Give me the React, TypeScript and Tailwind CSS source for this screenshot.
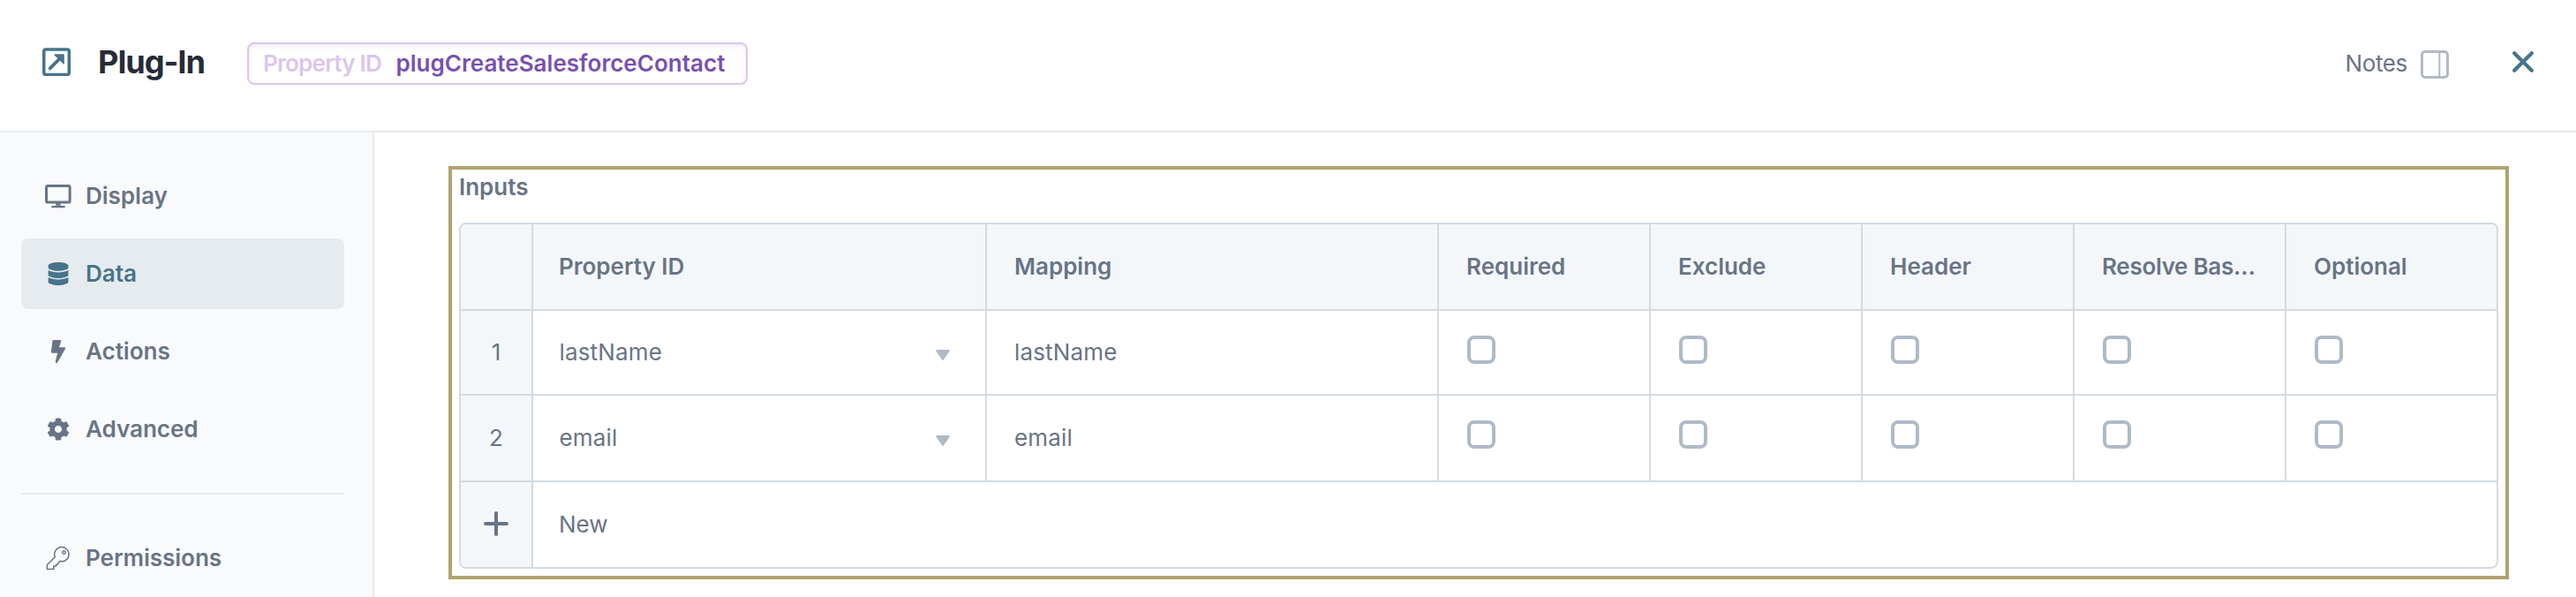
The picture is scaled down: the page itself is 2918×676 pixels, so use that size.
import type { ReactNode } from "react";
import { FaBolt, FaCog, FaDatabase } from "react-icons/fa";

function PlugInIcon() {
  return (
    <svg width="32" height="32" viewBox="0 0 32 32" fill="none">
      <rect x="1.75" y="2" width="28.5" height="28.5" rx="2" stroke="#46748b" strokeWidth="3.5" />
      <path d="M8.7 23.3 L20 12" stroke="#46748b" strokeWidth="3.8" strokeLinecap="round" />
      <path d="M14.2 7.2H23.6a1.2 1.2 0 0 1 1.2 1.2V18.2a.6.6 0 0 1-1 .4L13.6 8.4a.7.7 0 0 1 .6-1.2z" fill="#46748b" />
    </svg>
  );
}

function DisplayIcon() {
  return (
    <svg width="30" height="27" viewBox="0 0 30 27" fill="none">
      <rect x="1.5" y="1.5" width="26.6" height="18.6" rx="1.6" stroke="currentColor" strokeWidth="3" />
      <path d="M12.6 20.5h4.6l.6 3.2h-5.8z" fill="currentColor" />
      <path d="M8.2 25.2h13.6" stroke="currentColor" strokeWidth="2.2" strokeLinecap="round" />
    </svg>
  );
}

function KeyIcon() {
  return (
    <svg width="28" height="28" viewBox="0 0 84 84" fill="none" stroke="currentColor" strokeWidth="4.5" strokeLinejoin="round">
      <path d="M4 79.500V64.500L31 38.500A24.500 24.500 0 1 1 54 53.500L47 52.500L41.500 58.500V62.500L36 63.500L34.500 69H26.500V79.500Z" />
      <circle cx="61.500" cy="22.500" r="5" />
    </svg>
  );
}

function NavItem({ icon, label, active = false }: { icon: ReactNode; label: string; active?: boolean }) {
  return (
    <div
      className={
        active
          ? "flex h-20 shrink-0 items-center gap-[15px] rounded-lg bg-[#e6ebef] pl-[26px] text-[#46748b]"
          : "flex h-20 shrink-0 items-center gap-[15px] pl-[26px] text-[#687486]"
      }
    >
      <span className="flex w-8 justify-center">{icon}</span>
      <span className="text-[26px] leading-8 font-semibold">{label}</span>
    </div>
  );
}

const flags = ["Required", "Exclude", "Header", "Resolve Bas…", "Optional"];
const rows = ["lastName", "email"];

export default function App() {
  return (
    <div className="flex h-[676px] w-full flex-col overflow-hidden bg-white font-['Inter',sans-serif] text-[26px] leading-8 text-[#687486]">
      <header className="flex h-[150px] shrink-0 border-b-2 border-[#e6ebee] pl-12">
        <div className="mt-[54px] h-8 w-8">
          <PlugInIcon />
        </div>
        <h1 className="mt-[48px] ml-[31px] w-[169px] text-[36px] leading-[44px] font-bold tracking-[-0.95px] text-[#252c38]">
          Plug-In
        </h1>
        <div className="mt-12 flex h-12 w-[567px] items-center rounded-lg border-2 border-[#dcc5ec] pl-4 font-semibold shadow-[inset_0_2px_6px_rgba(100,60,140,0.10)]">
          <span className="w-[150.5px] tracking-[-0.75px] text-[#dcc5ed]">Property ID</span>
          <span className="tracking-[0.02px] text-[#7850b0]">plugCreateSalesforceContact</span>
        </div>
        <div className="mt-14 mr-12 ml-auto flex">
          <span className="w-[85.5px] tracking-[-0.4px]">Notes</span>
          <svg className="mt-px" width="32" height="32" viewBox="0 0 32 32" fill="none" stroke="#afbac7">
            <rect x="1.500" y="1.500" width="29" height="29" rx="3.500" strokeWidth="3" />
            <path d="M21.300 2v28" strokeWidth="2" />
          </svg>
          <svg className="mt-0.5 ml-[72px]" width="24" height="24" viewBox="0 0 24 24" fill="none" stroke="#46748b">
            <path d="M2.200 2.200l19.600 19.600M21.800 2.200L2.200 21.800" strokeWidth="4.200" strokeLinecap="round" />
          </svg>
        </div>
      </header>

      <div className="flex min-h-0 flex-1">
        <nav className="flex w-[424px] shrink-0 flex-col gap-2 border-r-2 border-[#e6ebee] bg-[#f9fafc] pt-8 pr-8 pl-6">
          <NavItem icon={<DisplayIcon />} label="Display" />
          <NavItem icon={<FaDatabase size={26} />} label="Data" active />
          <NavItem icon={<FaBolt size={26} />} label="Actions" />
          <NavItem icon={<FaCog size={26} />} label="Advanced" />
          <div className="my-6 h-0.5 shrink-0 bg-[#e6eaed]" />
          <NavItem icon={<KeyIcon />} label="Permissions" />
        </nav>

        <main className="flex-1 pt-[38px] pr-[76px] pl-[84px]">
          <section className="h-[468px] border-4 border-[#b0a36e] px-2">
            <h2 className="mt-1 mb-6 font-semibold">Inputs</h2>
            <div className="grid h-[392px] grid-cols-[82px_514px_512px_240px_240px_240px_240px_238px] grid-rows-[98px_96px_98px_96px] overflow-hidden rounded-lg border-2 border-[#d2dbe1]">
              <div className="border-r-2 border-b-2 border-[#d2dbe1] bg-[#f4f7fa]" />
              <div className="flex items-center border-r-2 border-b-2 border-[#d2dbe1] bg-[#f4f7fa] pb-px pl-[29px] font-semibold">Property ID</div>
              <div className="flex items-center border-r-2 border-b-2 border-[#d2dbe1] bg-[#f4f7fa] pb-px pl-[31px] font-semibold">Mapping</div>
              {flags.map((flag, i) => (
                <div
                  key={flag}
                  className={
                    i === flags.length - 1
                      ? "flex items-center border-b-2 border-[#d2dbe1] bg-[#f4f7fa] pb-px pl-[31px] font-semibold"
                      : i === 3
                        ? "flex items-center border-r-2 border-b-2 border-[#d2dbe1] bg-[#f4f7fa] pb-px pl-[31px] font-semibold tracking-[-0.3px]"
                        : "flex items-center border-r-2 border-b-2 border-[#d2dbe1] bg-[#f4f7fa] pb-px pl-[31px] font-semibold"
                  }
                >
                  {flag}
                </div>
              ))}
              {rows.map((name, i) => (
                <Row key={name} index={i + 1} name={name} />
              ))}
              <div className="flex items-center justify-center border-r-2 border-[#d2dbe1] bg-[#f4f7fa] pb-0.5">
                <svg width="28" height="28" viewBox="0 0 28 28" stroke="currentColor" strokeWidth="4" strokeLinecap="round">
                  <path d="M14 2v24M2 14h24" />
                </svg>
              </div>
              <div className="col-span-7 flex items-center pl-[29px]">New</div>
            </div>
          </section>
        </main>
      </div>
    </div>
  );
}

function Row({ index, name }: { index: number; name: string }) {
  return (
    <>
      <div className="flex items-center justify-center border-r-2 border-b-2 border-[#d2dbe1] bg-[#f4f7fa]">{index}</div>
      <div className="flex items-center justify-between border-r-2 border-b-2 border-[#d2dbe1] pr-10 pl-[29.500px]">
        <span className="tracking-[0.15px]">{name}</span>
        <svg className="mt-1.5" width="16" height="12" viewBox="0 0 16 12" fill="#afbac7">
          <path d="M.8 0H15.200L16 1L8.800 11.400a1 1 0 0 1-1.600 0L0 1Z" />
        </svg>
      </div>
      <div className="flex items-center border-r-2 border-b-2 border-[#d2dbe1] pl-[31px] tracking-[0.15px]">{name}</div>
      {flags.map((flag, i) => (
        <div
          key={flag}
          className={
            i === flags.length - 1
              ? "border-b-2 border-[#d2dbe1] pt-7 pl-8"
              : "border-r-2 border-b-2 border-[#d2dbe1] pt-7 pl-8"
          }
        >
          <div className="h-8 w-8 rounded-lg border-4 border-[#afbac7]" />
        </div>
      ))}
    </>
  );
}
